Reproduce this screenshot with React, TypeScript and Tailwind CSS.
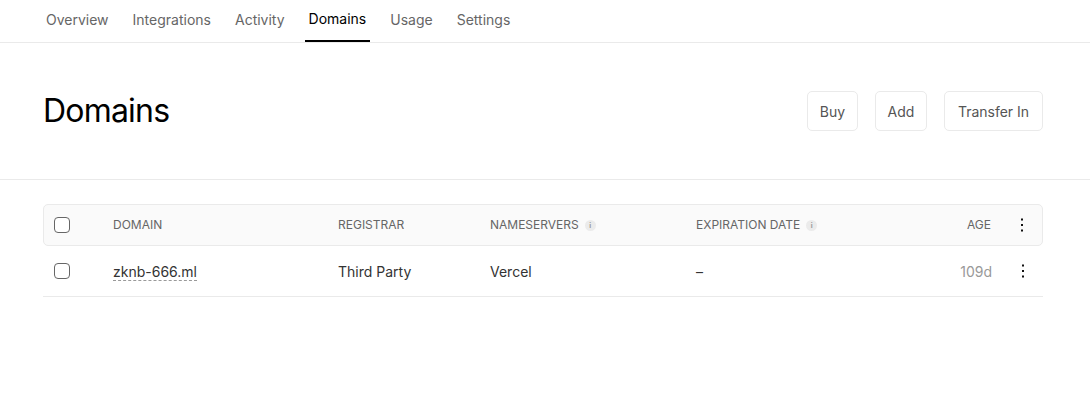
import React from "react";

const tabs = ["Overview", "Integrations", "Activity", "Domains", "Usage", "Settings"];

const InfoDot = () => (
  <span className="ml-[6px] inline-flex h-[11px] w-[11px] items-center justify-center rounded-full bg-[#ebebeb] text-[7px] font-bold leading-none text-[#999]">
    i
  </span>
);

const Dots = () => (
  <svg width="4" height="16" viewBox="0 0 4 16" className="text-[#111]">
    <rect x="1" y="1.5" width="2" height="2" fill="currentColor" />
    <rect x="1" y="7" width="2" height="2" fill="currentColor" />
    <rect x="1" y="12.5" width="2" height="2" fill="currentColor" />
  </svg>
);

const Checkbox = () => (
  <span className="block h-[16px] w-[16px] rounded-[4px] border border-[#666] bg-white" />
);

export default function App() {
  return (
    <div className="min-h-screen bg-white font-['Inter','Liberation_Sans',sans-serif] text-[#111]">
      <nav className="flex h-[43px] items-stretch gap-[16px] border-b border-[#eaeaea] pl-[42px]">
        {tabs.map((t) => (
          <div
            key={t}
            className={
              t === "Domains"
                ? "flex items-center border-b-2 border-black px-[4px] pb-[4px] text-[14px] text-black"
                : "flex items-center px-[4px] pb-[4px] text-[14px] text-[#666]"
            }
          >
            {t}
          </div>
        ))}
      </nav>

      <div className="border-b border-[#eaeaea]">
        <div className="flex items-center justify-between pb-[48px] pl-[43px] pr-[47px] pt-[48px]">
          <h1 className="text-[32px] font-normal leading-[40px] tracking-[-0.8px] text-black">Domains</h1>
          <div className="flex gap-[17px]">
            <button className="h-[40px] w-[51px] rounded-[5px] border border-[#eaeaea] text-[14px] text-[#555]">Buy</button>
            <button className="h-[40px] w-[52px] rounded-[5px] border border-[#eaeaea] text-[14px] text-[#555]">Add</button>
            <button className="h-[40px] w-[99px] rounded-[5px] border border-[#eaeaea] text-[14px] text-[#555]">Transfer In</button>
          </div>
        </div>
      </div>

      <div className="pl-[43px] pr-[47px] pt-[24px]">
        <div className="flex h-[42px] items-center rounded-[5px] border border-[#eaeaea] bg-[#fafafa] text-[12px] text-[#666]">
          <div className="w-[69px] pl-[10px]">
            <Checkbox />
          </div>
          <div className="w-[225px]">DOMAIN</div>
          <div className="w-[152px]">REGISTRAR</div>
          <div className="flex w-[206px] items-center">
            NAMESERVERS
            <InfoDot />
          </div>
          <div className="flex flex-1 items-center">
            EXPIRATION DATE
            <InfoDot />
          </div>
          <div className="w-[80px] pr-[1px] text-right">AGE</div>
          <div className="flex w-[50px] justify-center pl-[9px]">
            <Dots />
          </div>
        </div>

        <div className="flex h-[51px] items-center border-b border-[#eaeaea] text-[14px] text-[#333]">
          <div className="w-[70px] pl-[11px]">
            <Checkbox />
          </div>
          <div className="w-[225px]">
            <span className="border-b border-dashed border-[#999]">zknb-666.ml</span>
          </div>
          <div className="w-[152px]">Third Party</div>
          <div className="w-[206px]">Vercel</div>
          <div className="flex-1">–</div>
          <div className="w-[80px] pr-[1px] text-right text-[#999]">109d</div>
          <div className="flex w-[50px] justify-center pl-[9px]">
            <Dots />
          </div>
        </div>
      </div>
    </div>
  );
}
